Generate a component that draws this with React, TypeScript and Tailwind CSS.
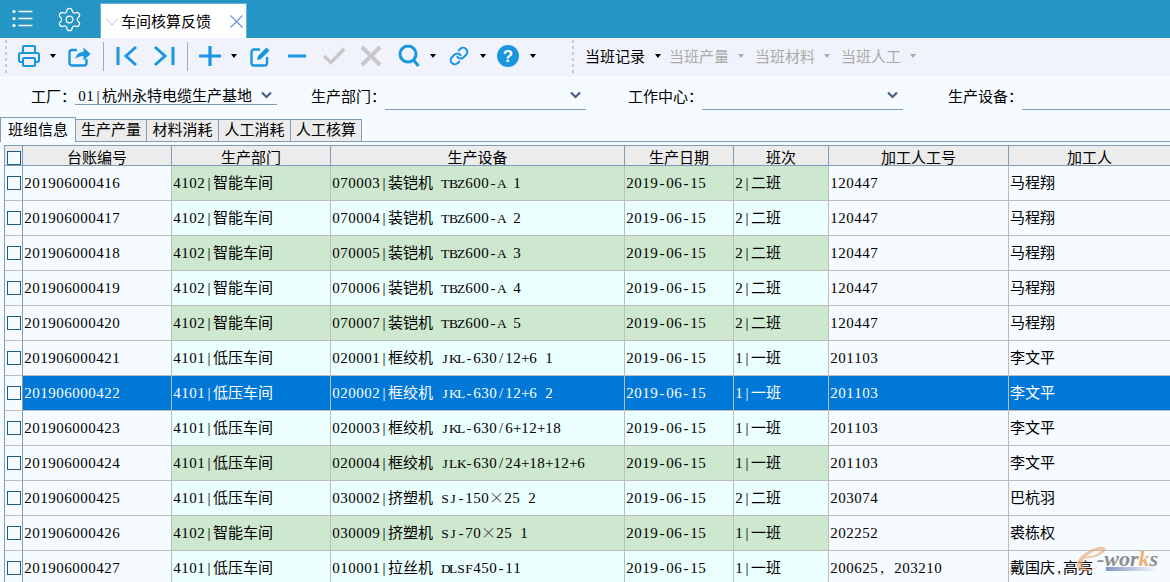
import React from 'react';
import { Settings, Printer, Link } from 'lucide-react';

const CJK = 'font-["Noto_Sans_CJK_SC",sans-serif] text-[15px]';
const HALF = 'inline-block w-[8px] text-center whitespace-pre font-["Liberation_Serif",serif] text-[15px]';
const HALF_CAP = 'inline-block w-[8px] text-center whitespace-pre font-["Liberation_Serif",serif] text-[13.5px]';

// the grid control uses half width latin (8px a char) and 15px chinese
const Txt = ({ s }: { s: string }) => (
  <span className="whitespace-pre">
    {s.split(/([\u4e00-\u9fff]+)/).map((p, i) =>
      /[\u4e00-\u9fff]/.test(p) ? (
        <span key={i} className={CJK}>{p}</span>
      ) : (
        p.split('').map((c, j) =>
          c === '×' ? (
            <span key={`${i}-${j}`} className='inline-block w-[15px] text-center font-["Noto_Sans_CJK_SC",sans-serif] text-[15px] leading-none font-light text-[#333333]'>{c}</span>
          ) : (
            <span key={`${i}-${j}`} className={/[A-Z]/.test(c) ? HALF_CAP : HALF}>{c}</span>
          )
        )
      )
    )}
  </span>
);

const Caret = ({ gray, className }: { gray?: boolean; className?: string }) => (
  <span
    className={`inline-block w-0 h-0 border-l-[3px] border-r-[3px] border-t-[4px] border-l-transparent border-r-transparent ${gray ? 'border-t-[#aaaaaa]' : 'border-t-black'} ${className ?? ''}`}
  />
);

const Grip = ({ className }: { className?: string }) => (
  <div className={`flex flex-col gap-[3px] w-[2px] ${className ?? ''}`}>
    {[...Array(6)].map((_, i) => (
      <span key={i} className="block w-[2px] h-[3px] bg-[#c8c8c8]" />
    ))}
  </div>
);

const Sep = ({ className }: { className?: string }) => <div className={`w-px h-[29px] bg-[#a8a8a8] ${className ?? ''}`} />;

const FieldArrow = () => (
  <svg width="11" height="8" viewBox="0 0 11 8" fill="none" stroke="#4a5f85" strokeWidth="2.200">
    <path d="M1 1.500l4.500 4.500L10 1.500" />
  </svg>
);

const Field = ({ label, value, labelW, lineW, lineH, ml, chevron = true }: { label: string; value?: string; labelW: number; lineW: string; lineH: string; ml: string; chevron?: boolean }) => (
  <div className={`flex items-start ${ml}`}>
    <span className={`${CJK} leading-[22px] whitespace-nowrap text-black`} style={{ width: labelW }}>{label}</span>
    <div className={`${lineW} ${lineH} border-b border-[#7f9db9] pl-[3px] pr-[5px]`}>
      <div className="h-[20px] flex items-center justify-between">
        <span className="whitespace-nowrap leading-[20px]">{value ? <Txt s={value} /> : null}</span>
        {chevron && <FieldArrow />}
      </div>
    </div>
  </div>
);

const headers = ['台账编号', '生产部门', '生产设备', '生产日期', '班次', '加工人工号', '加工人'];

type Row = { id: string; dept: string; eq: string; shift: string; no: string; who: string; green?: boolean; sel?: boolean };

const rows: Row[] = [
  { id: '201906000416', dept: '4102|智能车间', eq: '070003|装铠机 TBZ600-A 1', shift: '2|二班', no: '120447', who: '马程翔', green: true },
  { id: '201906000417', dept: '4102|智能车间', eq: '070004|装铠机 TBZ600-A 2', shift: '2|二班', no: '120447', who: '马程翔' },
  { id: '201906000418', dept: '4102|智能车间', eq: '070005|装铠机 TBZ600-A 3', shift: '2|二班', no: '120447', who: '马程翔', green: true },
  { id: '201906000419', dept: '4102|智能车间', eq: '070006|装铠机 TBZ600-A 4', shift: '2|二班', no: '120447', who: '马程翔' },
  { id: '201906000420', dept: '4102|智能车间', eq: '070007|装铠机 TBZ600-A 5', shift: '2|二班', no: '120447', who: '马程翔', green: true },
  { id: '201906000421', dept: '4101|低压车间', eq: '020001|框绞机 JKL-630/12+6 1', shift: '1|一班', no: '201103', who: '李文平' },
  { id: '201906000422', dept: '4101|低压车间', eq: '020002|框绞机 JKL-630/12+6 2', shift: '1|一班', no: '201103', who: '李文平', sel: true },
  { id: '201906000423', dept: '4101|低压车间', eq: '020003|框绞机 JKL-630/6+12+18', shift: '1|一班', no: '201103', who: '李文平' },
  { id: '201906000424', dept: '4101|低压车间', eq: '020004|框绞机 JLK-630/24+18+12+6', shift: '1|一班', no: '201103', who: '李文平', green: true },
  { id: '201906000425', dept: '4101|低压车间', eq: '030002|挤塑机 SJ-150×25 2', shift: '2|二班', no: '203074', who: '巴杭羽' },
  { id: '201906000426', dept: '4102|智能车间', eq: '030009|挤塑机 SJ-70×25 1', shift: '1|一班', no: '202252', who: '裘栋权', green: true },
  { id: '201906000427', dept: '4101|低压车间', eq: '010001|拉丝机 DLSF450-11', shift: '1|一班', no: '200625, 203210', who: '戴国庆,高亮' },
];

const cols = 'grid grid-cols-[18px_149px_159px_294px_109px_95px_180px_1fr]';

const tabs = [
  { t: '生产产量', w: 'w-[71px]' },
  { t: '材料消耗', w: 'w-[72px]' },
  { t: '人工消耗', w: 'w-[72px]' },
  { t: '人工核算', w: 'w-[71px]' },
];

export default function App() {
  return (
    <div className="relative w-[1170px] h-[582px] overflow-hidden bg-[#f6fbff] text-black">
      {/* Top bar */}
      <div className="h-[38px] bg-[#2595c5] flex items-end">
        <svg width="22" height="20" viewBox="0 0 22 20" className="ml-[12px] mb-[9px] text-white" fill="none" stroke="currentColor">
          <circle cx="2" cy="2.500" r="1.600" fill="currentColor" stroke="none" />
          <circle cx="2" cy="9.500" r="1.600" fill="currentColor" stroke="none" />
          <circle cx="2" cy="16.500" r="1.600" fill="currentColor" stroke="none" />
          <path d="M6.500 2.500h14M6.500 9.500h14M6.500 16.500h14" strokeWidth="1.600" />
        </svg>
        <Settings size={27} strokeWidth={1.100} className="ml-[22px] mb-[5px] text-white" />
        <div className="ml-[17px] w-[147px] h-[35px] bg-white border-t border-x border-[#5fb3d8] flex items-center">
          <svg width="12" height="8" viewBox="0 0 12 8" className="ml-[5px] mt-[1px]" fill="none" stroke="#a9c4ec" strokeWidth="1">
            <path d="M.5 1l5.500 6 5.500-6" />
          </svg>
          <span className={`${CJK} ml-[3px] text-black whitespace-nowrap`}>车间核算反馈</span>
          <svg width="13" height="13" viewBox="0 0 13 13" className="ml-[19px]" fill="none" stroke="#6a8fe0" strokeWidth="1.100">
            <path d="M.5.500l12 12M12.500.500l-12 12" />
          </svg>
        </div>
      </div>

      {/* Toolbar */}
      <div className="h-[38px] bg-[#f0f3fb] flex items-center pb-[2px] text-[#1a96df]">
        <Grip className="ml-[5px]" />
        <Printer size={24} strokeWidth={2.100} className="ml-[10px]" />
        <Caret className="ml-[9px]" />
        <svg width="23" height="24" viewBox="0 0 23 24" className="ml-[12px]" fill="none" stroke="currentColor" strokeWidth="2.400">
          <path d="M9 6H4a2.500 2.500 0 0 0-2.500 2.500V19A2.500 2.500 0 0 0 4 21.500h12a2.500 2.500 0 0 0 2.500-2.500v-4" />
          <path d="M7.500 15c.5-4.500 3.500-7 8-7V3.500l7 6.500-7 6.500V12c-3 0-6 .8-8 3z" fill="currentColor" stroke="none" />
        </svg>
        <Sep className="ml-[12px]" />
        <svg width="22" height="24" viewBox="0 0 22 24" className="ml-[12px]" fill="none" stroke="currentColor" strokeWidth="3">
          <path d="M2 3v18" />
          <path d="M20 3l-10 9 10 9" />
        </svg>
        <svg width="22" height="24" viewBox="0 0 22 24" className="ml-[15px]" fill="none" stroke="currentColor" strokeWidth="3">
          <path d="M20 3v18" />
          <path d="M2 3l10 9-10 9" />
        </svg>
        <Sep className="ml-[12px]" />
        <svg width="22" height="22" viewBox="0 0 22 22" className="ml-[11px]" fill="none" stroke="currentColor" strokeWidth="3.200">
          <path d="M11 1v20M0 11h22" />
        </svg>
        <Caret className="ml-[10px]" />
        <svg width="21" height="22" viewBox="0 0 21 22" className="ml-[13px]" fill="none" stroke="currentColor" strokeWidth="2.400">
          <path d="M10 4.500H4a2.500 2.500 0 0 0-2.500 2.500v11A2.500 2.500 0 0 0 4 20.500h10.500A2.500 2.500 0 0 0 17 18v-6" />
          <path d="M7 15l1-4 8.500-8.500 3 3L11 14z" fill="currentColor" stroke="none" />
        </svg>
        <svg width="18" height="4" viewBox="0 0 18 4" className="ml-[17px]">
          <rect width="18" height="3" y="0.500" fill="currentColor" />
        </svg>
        <svg width="24" height="20" viewBox="0 0 24 20" className="ml-[16px]" fill="none" stroke="#c8c8c8" strokeWidth="3.500">
          <path d="M2 10l7 6.500L22 3" />
        </svg>
        <svg width="22" height="22" viewBox="0 0 22 22" className="ml-[14px]" fill="none" stroke="#c8c8c8" strokeWidth="4">
          <path d="M2 2l18 18M20 2L2 20" />
        </svg>
        <svg width="22" height="24" viewBox="0 0 22 24" className="ml-[16px]" fill="none" stroke="currentColor" strokeWidth="3">
          <circle cx="10" cy="10" r="8" />
          <path d="M15.500 16l5 6" />
        </svg>
        <Caret className="ml-[10px]" />
        <Link size={20} strokeWidth={2.500} className="ml-[13px]" />
        <Caret className="ml-[11px]" />
        <div className="ml-[11px] w-[22px] h-[22px] rounded-full bg-[#1a96df] text-white flex items-center justify-center font-['Liberation_Sans',sans-serif] font-bold text-[17px] leading-none">?</div>
        <Caret className="ml-[11px]" />
        <Grip className="ml-[36px]" />
        <span className={`${CJK} ml-[11px] text-black whitespace-nowrap`}>当班记录</span>
        <Caret className="ml-[10px]" />
        <span className={`${CJK} ml-[8px] text-[#aaaaaa] whitespace-nowrap`}>当班产量</span>
        <Caret gray className="ml-[9px]" />
        <span className={`${CJK} ml-[11px] text-[#aaaaaa] whitespace-nowrap`}>当班材料</span>
        <Caret gray className="ml-[9px]" />
        <span className={`${CJK} ml-[11px] text-[#aaaaaa] whitespace-nowrap`}>当班人工</span>
        <Caret gray className="ml-[9px]" />
      </div>

      {/* Filter row */}
      <div className="h-[41px] flex items-start pt-[9px]">
        <Field ml="ml-[31px]" label="工厂：" labelW={44} lineW="w-[202px]" lineH="h-[20px]" value="01|杭州永特电缆生产基地" />
        <Field ml="ml-[34px]" label="生产部门：" labelW={74} lineW="w-[201px]" lineH="h-[25px]" />
        <Field ml="ml-[42px]" label="工作中心：" labelW={74} lineW="w-[201px]" lineH="h-[25px]" />
        <Field ml="ml-[45px]" label="生产设备：" labelW={74} lineW="w-[148px]" lineH="h-[25px]" chevron={false} />
      </div>

      {/* Tabs */}
      <div className="h-[25px] flex items-end border-b border-[#7f9db9]">
        <div className={`${CJK} w-[76px] h-[25px] -mb-px pb-[2px] bg-[#f6fbff] border-t border-x border-[#7f9db9] flex items-center justify-center`}>班组信息</div>
        {tabs.map((t) => (
          <div key={t.t} className={`${CJK} ${t.w} h-[22px] pb-[2px] bg-[#ececec] border-t border-r border-[#7f9db9] flex items-center justify-center`}>{t.t}</div>
        ))}
      </div>

      {/* Table */}
      <div className="mt-[3px] ml-[4px] border-l border-t border-[#7f9db9]">
        <div className={`${cols} h-[20px] bg-[#ececec] border-b border-[#7f9db9]`}>
          <div className="border-r border-[#7f9db9] flex items-center justify-center">
            <span className="w-[14px] h-[14px] border border-[#1f5c80] bg-[#f6fbff]" />
          </div>
          {headers.map((h) => (
            <div key={h} className={`${CJK} pb-[2px] border-r border-[#7f9db9] flex items-center justify-center last:border-r-0`}>{h}</div>
          ))}
        </div>
        {rows.map((r) => {
          const tint = r.sel ? 'bg-[#0078d7] text-white' : r.green ? 'bg-[#cde8cf]' : 'bg-[#ecffff]';
          const plain = r.sel ? 'bg-[#0078d7] text-white' : '';
          const cell = 'border-r border-b border-[#bdbdbd] flex items-center pl-px pb-[2px] whitespace-nowrap overflow-hidden';
          return (
            <div key={r.id} className={`${cols} h-[35px]`}>
              <div className="border-r border-b border-r-[#7f9db9] border-b-[#bdbdbd] flex items-center justify-center">
                <span className="w-[14px] h-[14px] border border-[#1f5c80] bg-[#f6fbff]" />
              </div>
              <div className={`${cell} ${plain}`}><Txt s={r.id} /></div>
              <div className={`${cell} ${tint}`}><Txt s={r.dept} /></div>
              <div className={`${cell} ${tint}`}><Txt s={r.eq} /></div>
              <div className={`${cell} ${tint}`}><Txt s="2019-06-15" /></div>
              <div className={`${cell} ${tint}`}><Txt s={r.shift} /></div>
              <div className={`${cell} ${plain}`}><Txt s={r.no} /></div>
              <div className={`${cell} ${plain} border-r-0`}><Txt s={r.who} /></div>
            </div>
          );
        })}
      </div>

      {/* Watermark */}
      <div className="absolute left-[1076px] top-[546px] w-[94px] h-[36px] pointer-events-none">
        <svg width="32" height="26" viewBox="0 0 32 26" className="absolute left-0 top-0 opacity-60">
          <path d="M5 12c8 1 19-1 24-7 2-3-1-5-6-4C13 3 3 10 1 17c-1 5 3 8 9 8 5 0 9-2 12-4-5 2-10 3-13 1-3-2-3-6-1-9 5-6 13-10 17-9-2 5-11 7-19 7z" fill="#f0a060" />
        </svg>
        <span className="absolute left-[21px] top-[1px] font-['Liberation_Serif',serif] font-bold italic text-[22px] leading-[24px] text-[#8c8c8c] whitespace-nowrap">-wor<span className="text-[#f2b070]">k</span>s</span>
        <div className="absolute left-[30px] top-[21px] w-[54px] h-[4px] bg-gradient-to-r from-[#7f96c8] to-white" />
      </div>
    </div>
  );
}
